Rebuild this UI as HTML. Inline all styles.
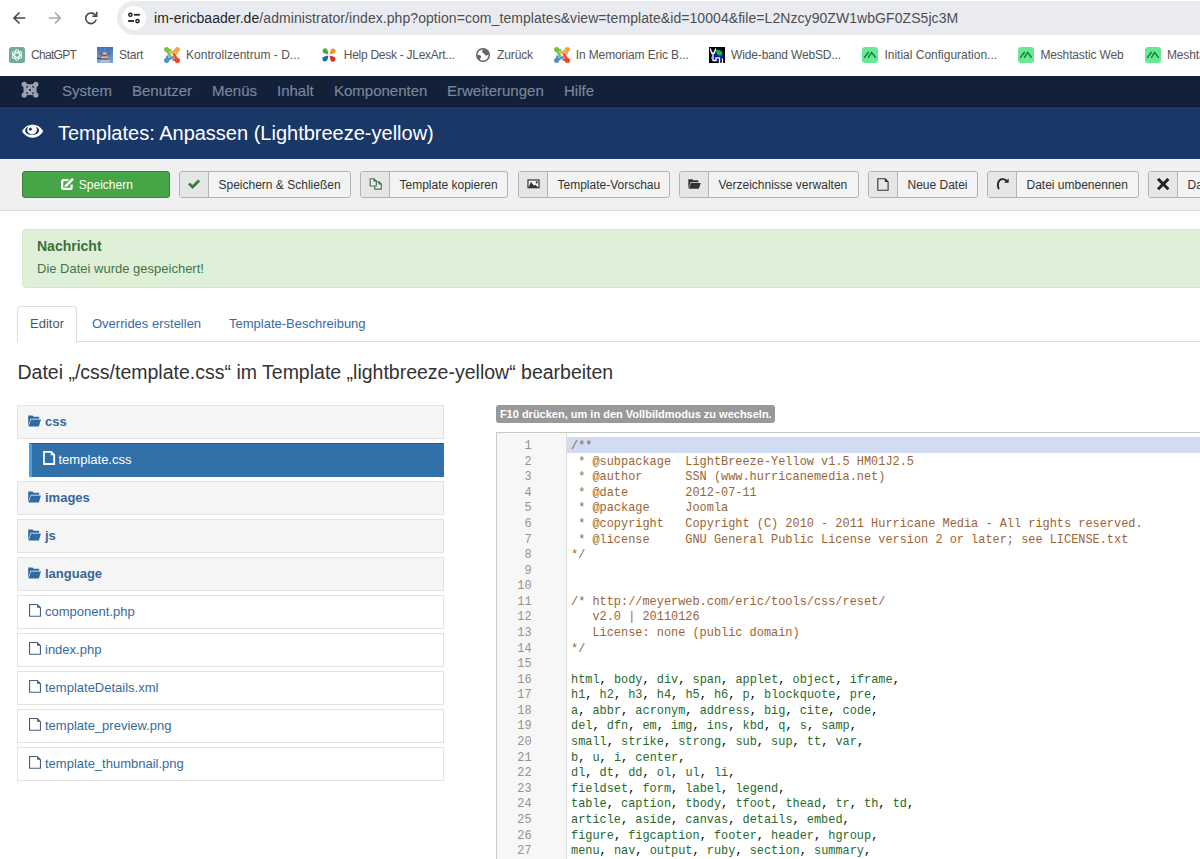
<!DOCTYPE html>
<html><head><meta charset="utf-8">
<style>
*{margin:0;padding:0;box-sizing:border-box}
html,body{width:1200px;height:859px;overflow:hidden;background:#fff;font-family:"Liberation Sans",sans-serif;position:relative}
.a{position:absolute;white-space:nowrap;line-height:1}
svg.a{display:block}
#chrome{position:absolute;left:0;top:0;width:1200px;height:76px;background:#fff}
#url{position:absolute;left:117px;top:1px;width:1100px;height:34px;border-radius:17px;background:#e9ebf1}
#site{position:absolute;left:122px;top:6px;width:24px;height:24px;border-radius:12px;background:#fff}
.bm{position:absolute;top:48.8px;font-size:12px;color:#555;line-height:1;white-space:nowrap}
.bi{position:absolute;top:47px;width:16px;height:16px;display:block}
#nav{position:absolute;left:0;top:76px;width:1200px;height:31px;background:#13203a;border-bottom:1px solid #0c1730}
.nv{position:absolute;top:82.9px;font-size:15px;color:#7c879b;line-height:1;white-space:nowrap;-webkit-text-stroke:0.15px #7c879b}
#hdr{position:absolute;left:0;top:107px;width:1200px;height:52px;background:#1a3867}
#tb{position:absolute;left:0;top:159px;width:1200px;height:52px;background:#f0f0f0;border-bottom:1px solid #dadada}
.btn{position:absolute;top:171px;height:27px;background:#f3f3f3;border:1px solid #b3b3b3;border-radius:3px}
.btn .ic{position:absolute;left:0;top:0;width:29px;height:25px;background:#e6e6e6;border-right:1px solid #b3b3b3;border-radius:2px 0 0 2px}
.btn .tx{position:absolute;top:6.8px;left:38.5px;font-size:12px;color:#333;line-height:1;white-space:nowrap}
.btn svg{position:absolute;display:block}
</style></head><body>
<div id="chrome">
  <svg class="a" style="left:10px;top:8px" width="20" height="20" viewBox="0 0 20 20"><path d="M15.3 10H4.5M9.5 4.5L4 10l5.5 5.5" fill="none" stroke="#474747" stroke-width="1.6"/></svg>
  <svg class="a" style="left:45px;top:8px" width="20" height="20" viewBox="0 0 20 20"><path d="M4 10h10.8M9.8 4.5L15.3 10l-5.5 5.5" fill="none" stroke="#a8a8a8" stroke-width="1.6"/></svg>
  <svg class="a" style="left:81px;top:8px" width="20" height="20" viewBox="0 0 20 20"><path d="M15 8.3A5.3 5.3 0 1 0 15.2 11.6" fill="none" stroke="#474747" stroke-width="1.6"/><path d="M15.7 3.7v4.6h-4.4" fill="none" stroke="#474747" stroke-width="1.6"/></svg>
  <div id="url"></div>
  <div id="site"></div>
  <svg class="a" style="left:126px;top:10px" width="16" height="16" viewBox="0 0 16 16"><circle cx="4.4" cy="4.75" r="1.6" fill="none" stroke="#1f1f1f" stroke-width="1.5"/><path d="M8.1 4.75H13.8" stroke="#1f1f1f" stroke-width="1.8"/><circle cx="11.5" cy="11.05" r="1.6" fill="none" stroke="#1f1f1f" stroke-width="1.5"/><path d="M2.1 11H8" stroke="#1f1f1f" stroke-width="1.8"/></svg>
  <div class="a" style="left:154px;top:10.5px;font-size:14px;color:#262626;letter-spacing:0.065px">im-ericbaader.de<span style="color:#4e4e4e">/administrator/index.php?option=com_templates&amp;view=template&amp;id=10004&amp;file=L2Nzcy90ZW1wbGF0ZS5jc3M</span></div>

  <!-- bookmark icons -->
  <svg class="bi" style="left:9px" viewBox="0 0 16 16"><rect width="16" height="16" rx="2.5" fill="#74aa9c"/><g fill="none" stroke="#e8fff8" stroke-width="1.05"><ellipse cx="8" cy="8" rx="2.3" ry="5.2"/><ellipse cx="8" cy="8" rx="2.3" ry="5.2" transform="rotate(60 8 8)"/><ellipse cx="8" cy="8" rx="2.3" ry="5.2" transform="rotate(120 8 8)"/></g></svg>
  <svg class="bi" style="left:97px" viewBox="0 0 16 16"><defs><linearGradient id="sk" x1="0" y1="0" x2="0" y2="1"><stop offset="0" stop-color="#3a72b8"/><stop offset="1" stop-color="#7fa9d6"/></linearGradient></defs><rect width="16" height="16" fill="url(#sk)"/><path d="M7.5 1.5L3 15.5h10z" fill="#c8ccd2" opacity=".75"/><path d="M6 4h3M4.5 8.5h6M3.5 12h8" stroke="#9a4a3a" stroke-width="1.4"/><circle cx="4" cy="6.5" r="1.2" fill="#a04a3c"/><circle cx="12" cy="6.5" r="1.2" fill="#a04a3c"/><path d="M0 11.5h4" stroke="#2a4a70" stroke-width="1"/></svg>
  <svg class="bi" style="left:164px" viewBox="0 0 16 16"><g fill="#7ac143" stroke="#7ac143"><circle cx="2.6" cy="2.6" r="2.2"/><path d="M7.4 3.6L2.6 2.6 6.4 9.6" fill="none" stroke-width="2.4" stroke-linejoin="round"/></g><g fill="#f9a541" stroke="#f9a541" transform="rotate(90 8 8)"><circle cx="2.6" cy="2.6" r="2.2"/><path d="M7.4 3.6L2.6 2.6 6.4 9.6" fill="none" stroke-width="2.4" stroke-linejoin="round"/></g><g fill="#f44321" stroke="#f44321" transform="rotate(180 8 8)"><circle cx="2.6" cy="2.6" r="2.2"/><path d="M7.4 3.6L2.6 2.6 6.4 9.6" fill="none" stroke-width="2.4" stroke-linejoin="round"/></g><g fill="#5091cd" stroke="#5091cd" transform="rotate(270 8 8)"><circle cx="2.6" cy="2.6" r="2.2"/><path d="M7.4 3.6L2.6 2.6 6.4 9.6" fill="none" stroke-width="2.4" stroke-linejoin="round"/></g></svg>
  <svg class="bi" style="left:321px" viewBox="0 0 16 16"><g fill="#5aa52a"><path d="M7.3 7.3C5.5 7.2 3.2 6.6 1.9 5.4A2.7 2.7 0 0 1 5.6 1.7C6.7 3 7.3 5.4 7.3 7.3z"/></g><g fill="#f39433" transform="rotate(90 8 8)"><path d="M7.3 7.3C5.5 7.2 3.2 6.6 1.9 5.4A2.7 2.7 0 0 1 5.6 1.7C6.7 3 7.3 5.4 7.3 7.3z"/></g><g fill="#e22b2b" transform="rotate(180 8 8)"><path d="M7.3 7.3C5.5 7.2 3.2 6.6 1.9 5.4A2.7 2.7 0 0 1 5.6 1.7C6.7 3 7.3 5.4 7.3 7.3z"/></g><g fill="#0f6cad" transform="rotate(270 8 8)"><path d="M7.3 7.3C5.5 7.2 3.2 6.6 1.9 5.4A2.7 2.7 0 0 1 5.6 1.7C6.7 3 7.3 5.4 7.3 7.3z"/></g></svg>
  <svg class="bi" style="left:475px" viewBox="0 0 16 16"><circle cx="8" cy="8" r="6.3" fill="#fff" stroke="#5f6368" stroke-width="1.5"/><path d="M8.5 2.2C7 3.3 6.8 4.4 7.5 5.4 8.5 6.6 9.8 6.8 10.2 8 10.6 9 12.3 8.5 13.9 7.6 13.8 4.8 11.5 2.4 8.5 2.2z" fill="#5f6368"/><path d="M2.1 8.6C3.5 8 5 8 5.6 9 6.2 10 5.2 11.5 4.5 12.2 5.3 13.2 6.3 13.6 7 13.8 4.3 13.5 2.5 11.3 2.1 8.6z" fill="#5f6368"/><path d="M2.2 8.5c1.3-.5 3-.6 3.6.6.5 1-.5 2.3-1.3 3.2" fill="#5f6368"/></svg>
  <svg class="bi" style="left:554px" viewBox="0 0 16 16"><g fill="#7ac143" stroke="#7ac143"><circle cx="2.6" cy="2.6" r="2.2"/><path d="M7.4 3.6L2.6 2.6 6.4 9.6" fill="none" stroke-width="2.4" stroke-linejoin="round"/></g><g fill="#f9a541" stroke="#f9a541" transform="rotate(90 8 8)"><circle cx="2.6" cy="2.6" r="2.2"/><path d="M7.4 3.6L2.6 2.6 6.4 9.6" fill="none" stroke-width="2.4" stroke-linejoin="round"/></g><g fill="#f44321" stroke="#f44321" transform="rotate(180 8 8)"><circle cx="2.6" cy="2.6" r="2.2"/><path d="M7.4 3.6L2.6 2.6 6.4 9.6" fill="none" stroke-width="2.4" stroke-linejoin="round"/></g><g fill="#5091cd" stroke="#5091cd" transform="rotate(270 8 8)"><circle cx="2.6" cy="2.6" r="2.2"/><path d="M7.4 3.6L2.6 2.6 6.4 9.6" fill="none" stroke-width="2.4" stroke-linejoin="round"/></g></svg>
  <svg class="bi" style="left:709px" viewBox="0 0 16 16"><rect width="16" height="16" fill="#000"/><circle cx="8.5" cy="8.5" r="6.5" fill="#0a1aa0"/><path d="M7 3.5c2-1 5-.5 6.5 2.5l-1 2.5h-3L7.5 6z" fill="#10c020"/><path d="M1.5 9.5c1 0 2 1 2.2 3l-1 .5z" fill="#10c020"/><path d="M1.2 1.5l1.5 4.5h2.6l1.5-4.5M4 6v7.5h3V10.8h3.5V16.5h3v-5" fill="none" stroke="#fff" stroke-width="1.3"/></svg>
  <svg class="bi" style="left:862px" viewBox="0 0 16 16"><rect width="16" height="16" rx="3.2" fill="#67e894"/><path d="M2.6 10.4L6.4 5.3M6.5 10.4L9.6 5.4 13.3 10.3" fill="none" stroke="#16803e" stroke-width="1.5" stroke-linecap="round" stroke-linejoin="round"/></svg>
  <svg class="bi" style="left:1018px" viewBox="0 0 16 16"><rect width="16" height="16" rx="3.2" fill="#67e894"/><path d="M2.6 10.4L6.4 5.3M6.5 10.4L9.6 5.4 13.3 10.3" fill="none" stroke="#16803e" stroke-width="1.5" stroke-linecap="round" stroke-linejoin="round"/></svg>
  <svg class="bi" style="left:1145px" viewBox="0 0 16 16"><rect width="16" height="16" rx="3.2" fill="#67e894"/><path d="M2.6 10.4L6.4 5.3M6.5 10.4L9.6 5.4 13.3 10.3" fill="none" stroke="#16803e" stroke-width="1.5" stroke-linecap="round" stroke-linejoin="round"/></svg>

  <div class="bm" style="left:31px;letter-spacing:-0.71px">ChatGPT</div>
  <div class="bm" style="left:119px;letter-spacing:-0.27px">Start</div>
  <div class="bm" style="left:186px;letter-spacing:0.03px">Kontrollzentrum - D...</div>
  <div class="bm" style="left:343.75px;letter-spacing:-0.27px">Help Desk - JLexArt...</div>
  <div class="bm" style="left:497px;letter-spacing:-0.11px">Zurück</div>
  <div class="bm" style="left:575.75px;letter-spacing:-0.12px">In Memoriam Eric B...</div>
  <div class="bm" style="left:731px;letter-spacing:-0.14px">Wide-band WebSD...</div>
  <div class="bm" style="left:884.4px;letter-spacing:0px">Initial Configuration...</div>
  <div class="bm" style="left:1040.4px;letter-spacing:-0.15px">Meshtastic Web</div>
  <div class="bm" style="left:1167px;letter-spacing:-0.15px">Meshtastic Web</div>
</div>

<div id="nav"></div>
<svg class="a" style="left:21px;top:81px" width="18" height="17" viewBox="0 0 18 17"><g fill="#9aa2b0"><circle cx="3.2" cy="3.3" r="2.6"/><circle cx="14.9" cy="3.3" r="2.6"/><circle cx="3.2" cy="14" r="2.6"/><circle cx="14.9" cy="14" r="2.6"/><path d="M2.2 2.2Q9 4.2 15.9 2.2Q15.2 8.65 15.9 15.1Q9 13.1 2.2 15.1Q2.9 8.65 2.2 2.2z"/></g><g stroke="#13203a" stroke-width="1.1" stroke-linecap="round"><path d="M5.6 6.3l1-1M11.6 5.3l1 1M5.6 11.6l1 1M12.6 11.6l-1 1"/></g><circle cx="9.05" cy="9" r="1.05" fill="#13203a"/></svg>
<div class="nv" style="left:62px">System</div>
<div class="nv" style="left:132px">Benutzer</div>
<div class="nv" style="left:212px">Menüs</div>
<div class="nv" style="left:277px">Inhalt</div>
<div class="nv" style="left:334px">Komponenten</div>
<div class="nv" style="left:447px">Erweiterungen</div>
<div class="nv" style="left:564px">Hilfe</div>

<div id="hdr"></div>
<svg class="a" style="left:21px;top:123px" width="23" height="16" viewBox="0 0 23 16"><path d="M11.6 1.8C6.8 1.8 3 4.6 1 8.2c2 3.6 5.8 6.45 10.6 6.45S20.2 11.8 22.2 8.2C20.2 4.6 16.4 1.8 11.6 1.8z" fill="#fff"/><ellipse cx="11.07" cy="7.5" rx="7.05" ry="4.55" fill="#1a3867"/><circle cx="11.07" cy="6.65" r="4.85" fill="#fff"/><circle cx="9.4" cy="6.3" r="1.45" fill="#1a3867"/></svg>
<div class="a" style="left:58px;top:123.1px;font-size:20px;color:#fff">Templates: Anpassen (Lightbreeze-yellow)</div>

<div id="tb"></div>
<!-- toolbar -->
<div class="btn" style="left:22px;width:148px;background:#46a546;border-color:#3b7f3b">
  <svg style="left:38px;top:6px" width="14" height="14" viewBox="0 0 14 14"><path d="M7.6 2.15H2.5a1.35 1.35 0 0 0-1.35 1.35V9.5a1.35 1.35 0 0 0 1.35 1.35H9.2a1.35 1.35 0 0 0 1.35-1.35V6.4" fill="none" stroke="#fff" stroke-width="2.3"/><path d="M4.4 8.4L12 0.8" stroke="#46a546" stroke-width="4.6"/><path d="M4.4 8.4L12 0.8" stroke="#fff" stroke-width="2.6"/><path d="M3.5 9.3l1.7-0.1-1.5-1.5z" fill="#fff"/></svg>
  <div class="tx" style="left:55.8px;color:#fff">Speichern</div>
</div>
<div class="btn" style="left:179px;width:172px"><div class="ic"></div>
  <svg style="left:7px;top:6.5px" width="14" height="11" viewBox="0 0 14 11"><path d="M1 5.6L3 3.6 5.5 6.1 11.2 0.5 13.2 2.5 5.5 10z" fill="#3a7d3a"/></svg>
  <div class="tx">Speichern &amp; Schließen</div></div>
<div class="btn" style="left:360px;width:148px"><div class="ic"></div>
  <svg style="left:7px;top:5px" width="15" height="14" viewBox="0 0 15 14"><path d="M6.7 4.7H10.9L13.3 7.1V12.1H6.7z" fill="#ededed" stroke="#4a6e4a" stroke-width="1.15"/><path d="M10.4 4L14 7.6H10.4z" fill="#4a6e4a"/><path d="M2.2 1.7H5.9L8.3 4.1V9H2.2z" fill="#ededed" stroke="#4a6e4a" stroke-width="1.15"/><path d="M5.4 1L9 4.6H5.4z" fill="#4a6e4a"/></svg>
  <div class="tx">Template kopieren</div></div>
<div class="btn" style="left:518px;width:152px"><div class="ic"></div>
  <svg style="left:7.5px;top:6.5px" width="14" height="10" viewBox="0 0 14 10"><rect x="1" y="1" width="11" height="7.7" fill="#fafafa" stroke="#333" stroke-width="1.2"/><path d="M1.6 8.7L3.9 2.7 6.9 6.5 8.5 5.7 11.4 8.7z" fill="#333"/><circle cx="9.7" cy="3.4" r="1.1" fill="#333"/></svg>
  <div class="tx">Template-Vorschau</div></div>
<div class="btn" style="left:679px;width:180px"><div class="ic"></div>
  <svg style="left:7.7px;top:7px" width="13" height="10" viewBox="0 0 13 10"><path d="M0.3 9.7V0.3h4l1 1h5v2H2.5L0.3 9.7z" fill="#333"/><path d="M2.8 4h10l-2 5.8H0.8z" fill="#333"/></svg>
  <div class="tx">Verzeichnisse verwalten</div></div>
<div class="btn" style="left:868px;width:110px"><div class="ic"></div>
  <svg style="left:7.7px;top:6px" width="12" height="13" viewBox="0 0 12 13"><path d="M0.8 0.8h7.4l2.9 2.9v8.5H0.8z" fill="none" stroke="#333" stroke-width="1.1"/><path d="M7.8 0.5l3.6 3.6H7.8z" fill="#333"/></svg>
  <div class="tx">Neue Datei</div></div>
<div class="btn" style="left:987px;width:152px"><div class="ic"></div>
  <svg style="left:8px;top:5px" width="14" height="13" viewBox="0 0 14 13"><path d="M2.6 11.4C1.2 8.5 1.6 2.4 6.4 2.1 8 2 9.3 2.6 10.4 3.9" fill="none" stroke="#222" stroke-width="1.9" stroke-linecap="round"/><path d="M12.6 1.4V5.8H8.1z" fill="#222"/></svg>
  <div class="tx">Datei umbenennen</div></div>
<div class="btn" style="left:1148px;width:120px"><div class="ic"></div>
  <svg style="left:7.5px;top:5.8px" width="13" height="13" viewBox="0 0 13 13"><path d="M2 1.9L10.4 10.3M10.4 1.9L2 10.3" stroke="#222" stroke-width="2.9" stroke-linecap="square"/></svg>
  <div class="tx">Datei löschen</div></div>
<style>
#alert{position:absolute;left:22px;top:229px;width:1200px;height:59px;background:#dff0d8;border:1px solid #d5e8cb;border-radius:3.5px}
.tab{position:absolute;font-size:13px;line-height:1;white-space:nowrap;margin-top:-0.4px}
#tabE{position:absolute;left:17px;top:306px;width:60px;height:36px;border:1px solid #ddd;border-bottom:none;border-radius:4px 4px 0 0;background:#fff}
#tabline{position:absolute;left:76px;top:341px;width:1130px;height:1px;background:#ddd}
.ti{position:absolute;left:17px;width:427px;height:34px;background:#f5f5f5;border:1px solid #e3e3e3}
.ti.f{background:#fff}
.ti .t{position:absolute;left:27px;top:9px;font-size:13px;line-height:1;color:#386a9c;white-space:nowrap}
.ti.d .t{font-weight:bold;color:#35669a}
.ti svg{position:absolute;display:block}
#sel{position:absolute;left:29px;top:443px;width:415px;height:34px;background:#3071a9;border-left:3px solid #45a0f0;border-top:1px solid #2a5d8c}
#badge{position:absolute;left:496px;top:405px;width:279px;height:18px;background:#999;border-radius:3px}
#editor{position:absolute;left:496px;top:432px;width:720px;height:440px;border:1px solid #c8c8c8;background:#fff}
#gutter{position:absolute;left:497px;top:433px;width:70px;height:430px;background:#f7f7f7;border-right:1px solid #ddd}
#active{position:absolute;left:567px;top:437px;width:640px;height:15.6px;background:#cfdcf1}
#code{position:absolute;left:571px;top:439.05px;font-family:"Liberation Mono",monospace;font-size:11.915px;line-height:15.58px;color:#000;white-space:pre}
#nums{position:absolute;left:500px;top:439.05px;width:31.5px;text-align:right;font-family:"Liberation Mono",monospace;font-size:11.875px;line-height:15.58px;color:#939393}
.ln,.nm{height:15.58px}
.cm{color:#9a6535}
.tg{color:#276a2c}
</style>
<div id="alert"></div>
<div class="a" style="left:37px;top:239.15px;font-size:14px;font-weight:bold;color:#3c6e3c">Nachricht</div>
<div class="a" style="left:37px;top:262.4px;font-size:13px;color:#477347">Die Datei wurde gespeichert!</div>

<div id="tabline"></div>
<div id="tabE"></div>
<div class="tab" style="left:30px;top:317px;color:#555">Editor</div>
<div class="tab" style="left:92px;top:317px;color:#3a6ba0">Overrides erstellen</div>
<div class="tab" style="left:229px;top:317px;color:#3a6ba0">Template-Beschreibung</div>

<div class="a" style="left:17.5px;top:363.2px;font-size:19.5px;color:#333">Datei „/css/template.css“ im Template „lightbreeze-yellow“ bearbeiten</div>
<div class="ti d" style="top:405px"><svg style="left:10px;top:8.6px" width="14" height="12" viewBox="0 0 14 12"><path d="M0.2 11.4V0.6h4.2l1.2 1.2h5.6v2H2.6z" fill="#2f6aa3"/><path d="M3 4.5h9.9L10.9 11.4H0.6z" fill="#2f6aa3"/><path d="M3 4.5h9.9" stroke="#8fb3d9" stroke-width="0.7"/></svg><div class="t">css</div></div>
<div id="sel"><svg style="position:absolute;left:10.5px;top:7px;display:block" width="13" height="14" viewBox="0 0 13 14"><path d="M0.95 0.95h7.25l3 3v9.05H0.95z" fill="none" stroke="#fff" stroke-width="1.8"/><path d="M7.8 0.3l3.9 3.9H7.8z" fill="#fff"/></svg><div style="position:absolute;left:26.5px;top:9px;font-size:13px;line-height:1;color:#fff;white-space:nowrap">template.css</div></div>
<div class="ti d" style="top:481px"><svg style="left:10px;top:8.6px" width="14" height="12" viewBox="0 0 14 12"><path d="M0.2 11.4V0.6h4.2l1.2 1.2h5.6v2H2.6z" fill="#2f6aa3"/><path d="M3 4.5h9.9L10.9 11.4H0.6z" fill="#2f6aa3"/><path d="M3 4.5h9.9" stroke="#8fb3d9" stroke-width="0.7"/></svg><div class="t">images</div></div>
<div class="ti d" style="top:519px"><svg style="left:10px;top:8.6px" width="14" height="12" viewBox="0 0 14 12"><path d="M0.2 11.4V0.6h4.2l1.2 1.2h5.6v2H2.6z" fill="#2f6aa3"/><path d="M3 4.5h9.9L10.9 11.4H0.6z" fill="#2f6aa3"/><path d="M3 4.5h9.9" stroke="#8fb3d9" stroke-width="0.7"/></svg><div class="t">js</div></div>
<div class="ti d" style="top:557px"><svg style="left:10px;top:8.6px" width="14" height="12" viewBox="0 0 14 12"><path d="M0.2 11.4V0.6h4.2l1.2 1.2h5.6v2H2.6z" fill="#2f6aa3"/><path d="M3 4.5h9.9L10.9 11.4H0.6z" fill="#2f6aa3"/><path d="M3 4.5h9.9" stroke="#8fb3d9" stroke-width="0.7"/></svg><div class="t">language</div></div>
<div class="ti f" style="top:595px"><svg style="left:11px;top:8px" width="13" height="14" viewBox="0 0 13 14"><path d="M0.55 0.55h7.7l3.2 3.2v8.45H0.55z" fill="none" stroke="#44607e" stroke-width="1.1"/><path d="M8.1 0.2l3.6 3.6H8.1z" fill="#44607e"/></svg><div class="t">component.php</div></div>
<div class="ti f" style="top:633px"><svg style="left:11px;top:8px" width="13" height="14" viewBox="0 0 13 14"><path d="M0.55 0.55h7.7l3.2 3.2v8.45H0.55z" fill="none" stroke="#44607e" stroke-width="1.1"/><path d="M8.1 0.2l3.6 3.6H8.1z" fill="#44607e"/></svg><div class="t">index.php</div></div>
<div class="ti f" style="top:671px"><svg style="left:11px;top:8px" width="13" height="14" viewBox="0 0 13 14"><path d="M0.55 0.55h7.7l3.2 3.2v8.45H0.55z" fill="none" stroke="#44607e" stroke-width="1.1"/><path d="M8.1 0.2l3.6 3.6H8.1z" fill="#44607e"/></svg><div class="t">templateDetails.xml</div></div>
<div class="ti f" style="top:709px"><svg style="left:11px;top:8px" width="13" height="14" viewBox="0 0 13 14"><path d="M0.55 0.55h7.7l3.2 3.2v8.45H0.55z" fill="none" stroke="#44607e" stroke-width="1.1"/><path d="M8.1 0.2l3.6 3.6H8.1z" fill="#44607e"/></svg><div class="t">template_preview.png</div></div>
<div class="ti f" style="top:747px"><svg style="left:11px;top:8px" width="13" height="14" viewBox="0 0 13 14"><path d="M0.55 0.55h7.7l3.2 3.2v8.45H0.55z" fill="none" stroke="#44607e" stroke-width="1.1"/><path d="M8.1 0.2l3.6 3.6H8.1z" fill="#44607e"/></svg><div class="t">template_thumbnail.png</div></div>
<div id="badge"></div>
<div class="a" style="left:499.9px;top:408.7px;font-size:11px;font-weight:bold;color:#fff">F10 drücken, um in den Vollbildmodus zu wechseln.</div>
<div id="editor"></div>
<div id="gutter"></div>
<div id="active"></div>
<div id="code"><div class="ln"><span class="cm">/**</span></div><div class="ln"><span class="cm"> * @subpackage  LightBreeze-Yellow v1.5 HM01J2.5</span></div><div class="ln"><span class="cm"> * @author      SSN (www.hurricanemedia.net)</span></div><div class="ln"><span class="cm"> * @date        2012-07-11</span></div><div class="ln"><span class="cm"> * @package     Joomla</span></div><div class="ln"><span class="cm"> * @copyright   Copyright (C) 2010 - 2011 Hurricane Media - All rights reserved.</span></div><div class="ln"><span class="cm"> * @license     GNU General Public License version 2 or later; see LICENSE.txt</span></div><div class="ln"><span class="cm">*/</span></div><div class="ln"></div><div class="ln"></div><div class="ln"><span class="cm">/* http://meyerweb.com/eric/tools/css/reset/</span></div><div class="ln"><span class="cm">   v2.0 | 20110126</span></div><div class="ln"><span class="cm">   License: none (public domain)</span></div><div class="ln"><span class="cm">*/</span></div><div class="ln"></div><div class="ln"><span class="tg">html</span>, <span class="tg">body</span>, <span class="tg">div</span>, <span class="tg">span</span>, <span class="tg">applet</span>, <span class="tg">object</span>, <span class="tg">iframe</span>,</div><div class="ln"><span class="tg">h1</span>, <span class="tg">h2</span>, <span class="tg">h3</span>, <span class="tg">h4</span>, <span class="tg">h5</span>, <span class="tg">h6</span>, <span class="tg">p</span>, <span class="tg">blockquote</span>, <span class="tg">pre</span>,</div><div class="ln"><span class="tg">a</span>, <span class="tg">abbr</span>, <span class="tg">acronym</span>, <span class="tg">address</span>, <span class="tg">big</span>, <span class="tg">cite</span>, <span class="tg">code</span>,</div><div class="ln"><span class="tg">del</span>, <span class="tg">dfn</span>, <span class="tg">em</span>, <span class="tg">img</span>, <span class="tg">ins</span>, <span class="tg">kbd</span>, <span class="tg">q</span>, <span class="tg">s</span>, <span class="tg">samp</span>,</div><div class="ln"><span class="tg">small</span>, <span class="tg">strike</span>, <span class="tg">strong</span>, <span class="tg">sub</span>, <span class="tg">sup</span>, <span class="tg">tt</span>, <span class="tg">var</span>,</div><div class="ln"><span class="tg">b</span>, <span class="tg">u</span>, <span class="tg">i</span>, <span class="tg">center</span>,</div><div class="ln"><span class="tg">dl</span>, <span class="tg">dt</span>, <span class="tg">dd</span>, <span class="tg">ol</span>, <span class="tg">ul</span>, <span class="tg">li</span>,</div><div class="ln"><span class="tg">fieldset</span>, <span class="tg">form</span>, <span class="tg">label</span>, <span class="tg">legend</span>,</div><div class="ln"><span class="tg">table</span>, <span class="tg">caption</span>, <span class="tg">tbody</span>, <span class="tg">tfoot</span>, <span class="tg">thead</span>, <span class="tg">tr</span>, <span class="tg">th</span>, <span class="tg">td</span>,</div><div class="ln"><span class="tg">article</span>, <span class="tg">aside</span>, <span class="tg">canvas</span>, <span class="tg">details</span>, <span class="tg">embed</span>,</div><div class="ln"><span class="tg">figure</span>, <span class="tg">figcaption</span>, <span class="tg">footer</span>, <span class="tg">header</span>, <span class="tg">hgroup</span>,</div><div class="ln"><span class="tg">menu</span>, <span class="tg">nav</span>, <span class="tg">output</span>, <span class="tg">ruby</span>, <span class="tg">section</span>, <span class="tg">summary</span>,</div></div>
<div id="nums"><div class="nm">1</div><div class="nm">2</div><div class="nm">3</div><div class="nm">4</div><div class="nm">5</div><div class="nm">6</div><div class="nm">7</div><div class="nm">8</div><div class="nm">9</div><div class="nm">10</div><div class="nm">11</div><div class="nm">12</div><div class="nm">13</div><div class="nm">14</div><div class="nm">15</div><div class="nm">16</div><div class="nm">17</div><div class="nm">18</div><div class="nm">19</div><div class="nm">20</div><div class="nm">21</div><div class="nm">22</div><div class="nm">23</div><div class="nm">24</div><div class="nm">25</div><div class="nm">26</div><div class="nm">27</div></div>
</body></html>
